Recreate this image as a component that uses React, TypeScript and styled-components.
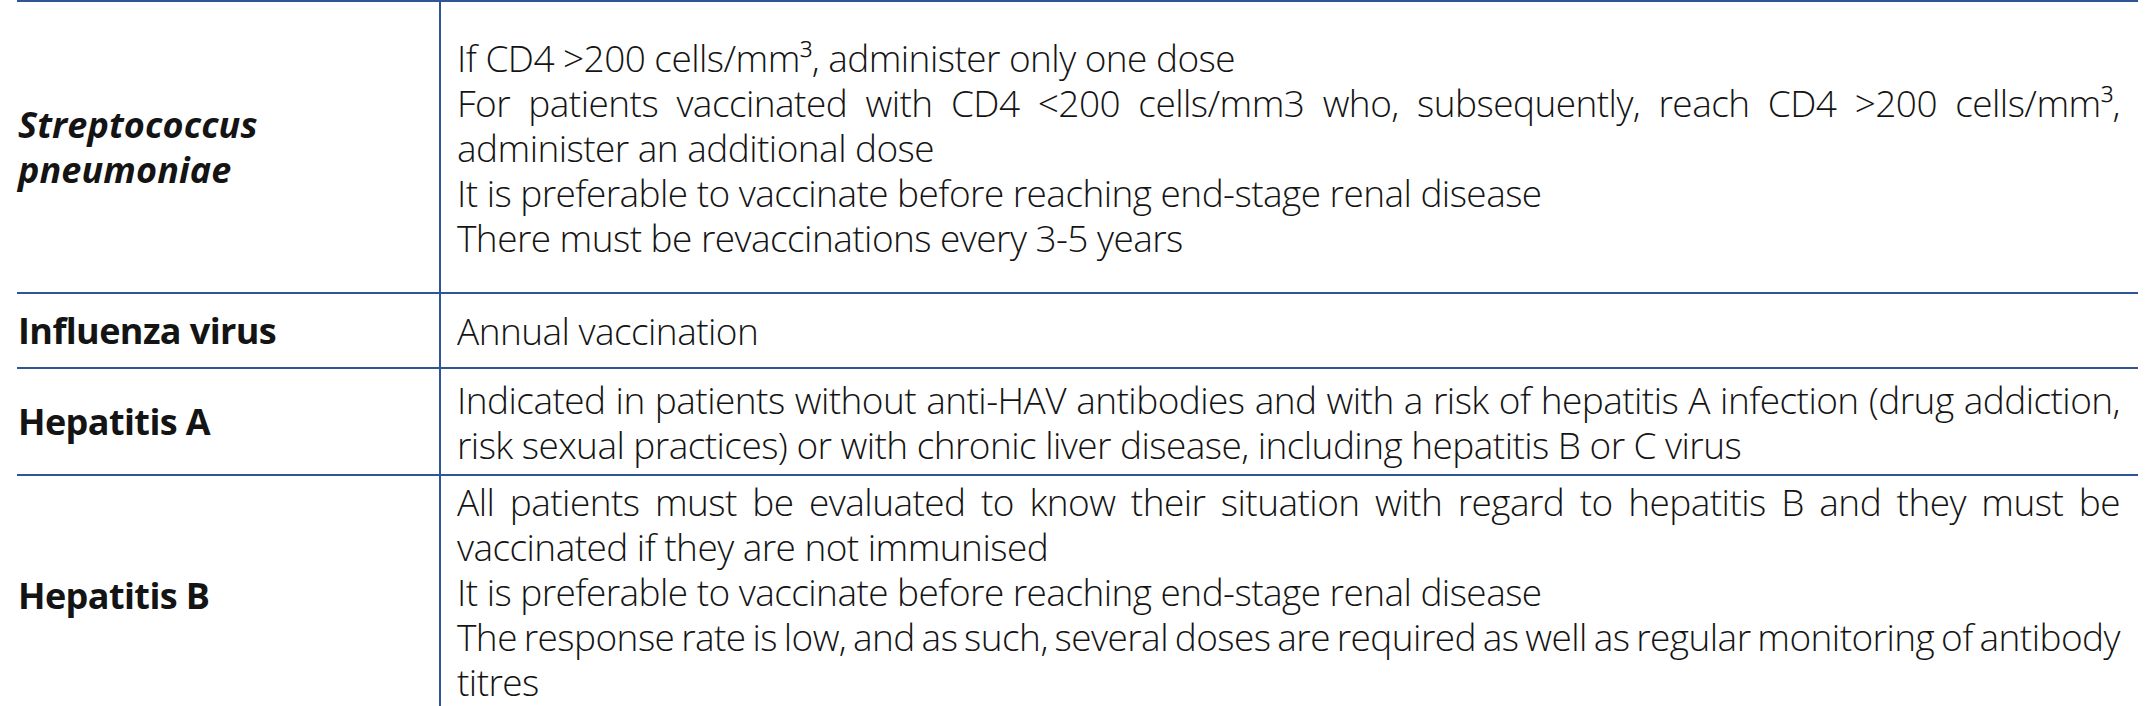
import React from "react";
import styled, { createGlobalStyle } from "styled-components";

const GlobalStyle = createGlobalStyle`
  html, body {
    margin: 0;
    padding: 0;
    background: #ffffff;
  }
  body {
    font-family: "Open Sans", "Noto Sans", "Liberation Sans", sans-serif;
    color: #141414;
  }
`;

const LINE = "#2f5595";

const Page = styled.div`
  width: 2153px;
  height: 706px;
  overflow: hidden;
  padding-left: 17px;
  box-sizing: border-box;
`;

const Table = styled.div`
  width: 2121px;
  display: flex;
  flex-direction: column;
`;

const Row = styled.div<{ $height?: number }>`
  display: grid;
  grid-template-columns: 422px 1fr;
  border-top: 2px solid ${LINE};
  box-sizing: border-box;
  height: ${(p) => (p.$height ? `${p.$height}px` : "auto")};
`;

const LabelCell = styled.div`
  display: flex;
  flex-direction: column;
  justify-content: center;
  padding-left: 1px;
  font-weight: 700;
  font-size: 36px;
  line-height: 45px;
`;

const Label = styled.span<{ $italic?: boolean }>`
  display: block;
  font-style: ${(p) => (p.$italic ? "italic" : "normal")};
  letter-spacing: ${(p) => (p.$italic ? "0.1px" : "-0.6px")};
`;

const ContentCell = styled.div<{ $padTop?: number }>`
  display: flex;
  flex-direction: column;
  justify-content: ${(p) => (p.$padTop !== undefined ? "flex-start" : "center")};
  border-left: 2px solid ${LINE};
  padding: ${(p) => (p.$padTop !== undefined ? `${p.$padTop}px` : "0")} 18px 0 16px;
  min-width: 0;
  font-weight: 300;
  font-size: 37px;
  line-height: 45px;
  letter-spacing: -0.55px;
`;

const Line = styled.div<{ $justify?: boolean }>`
  white-space: nowrap;
  text-align: ${(p) => (p.$justify ? "justify" : "left")};
  text-align-last: ${(p) => (p.$justify ? "justify" : "left")};
  word-spacing: ${(p) => (p.$justify ? "-5px" : "0")};
`;

type RowData = {
  label: string[];
  italic?: boolean;
  height?: number;
  padTop?: number;
  lines: { text: string; justify?: boolean }[];
};

const rows: RowData[] = [
  {
    label: ["Streptococcus", "pneumoniae"],
    italic: true,
    height: 292,
    lines: [
      { text: "If CD4 >200 cells/mm³, administer only one dose" },
      {
        text: "For patients vaccinated with CD4 <200 cells/mm3 who, subsequently, reach CD4 >200 cells/mm³,",
        justify: true,
      },
      { text: "administer an additional dose" },
      { text: "It is preferable to vaccinate before reaching end-stage renal disease" },
      { text: "There must be revaccinations every 3-5 years" },
    ],
  },
  {
    label: ["Influenza virus"],
    height: 75,
    lines: [{ text: "Annual vaccination" }],
  },
  {
    label: ["Hepatitis A"],
    height: 107,
    lines: [
      {
        text: "Indicated in patients without anti-HAV antibodies and with a risk of hepatitis A infection (drug addiction,",
        justify: true,
      },
      { text: "risk sexual practices) or with chronic liver disease, including hepatitis B or C virus" },
    ],
  },
  {
    label: ["Hepatitis B"],
    height: 240,
    padTop: 3,
    lines: [
      {
        text: "All patients must be evaluated to know their situation with regard to hepatitis B and they must be",
        justify: true,
      },
      { text: "vaccinated if they are not immunised" },
      { text: "It is preferable to vaccinate before reaching end-stage renal disease" },
      {
        text: "The response rate is low, and as such, several doses are required as well as regular monitoring of antibody",
        justify: true,
      },
      { text: "titres" },
    ],
  },
];

export default function App() {
  return (
    <>
      <GlobalStyle />
      <Page>
        <Table>
          {rows.map((r, i) => (
            <Row key={i} $height={r.height}>
              <LabelCell>
                {r.label.map((l, j) => (
                  <Label key={j} $italic={r.italic}>
                    {l}
                  </Label>
                ))}
              </LabelCell>
              <ContentCell $padTop={r.padTop}>
                {r.lines.map((ln, j) => (
                  <Line key={j} $justify={ln.justify}>
                    {ln.text}
                  </Line>
                ))}
              </ContentCell>
            </Row>
          ))}
        </Table>
      </Page>
    </>
  );
}
